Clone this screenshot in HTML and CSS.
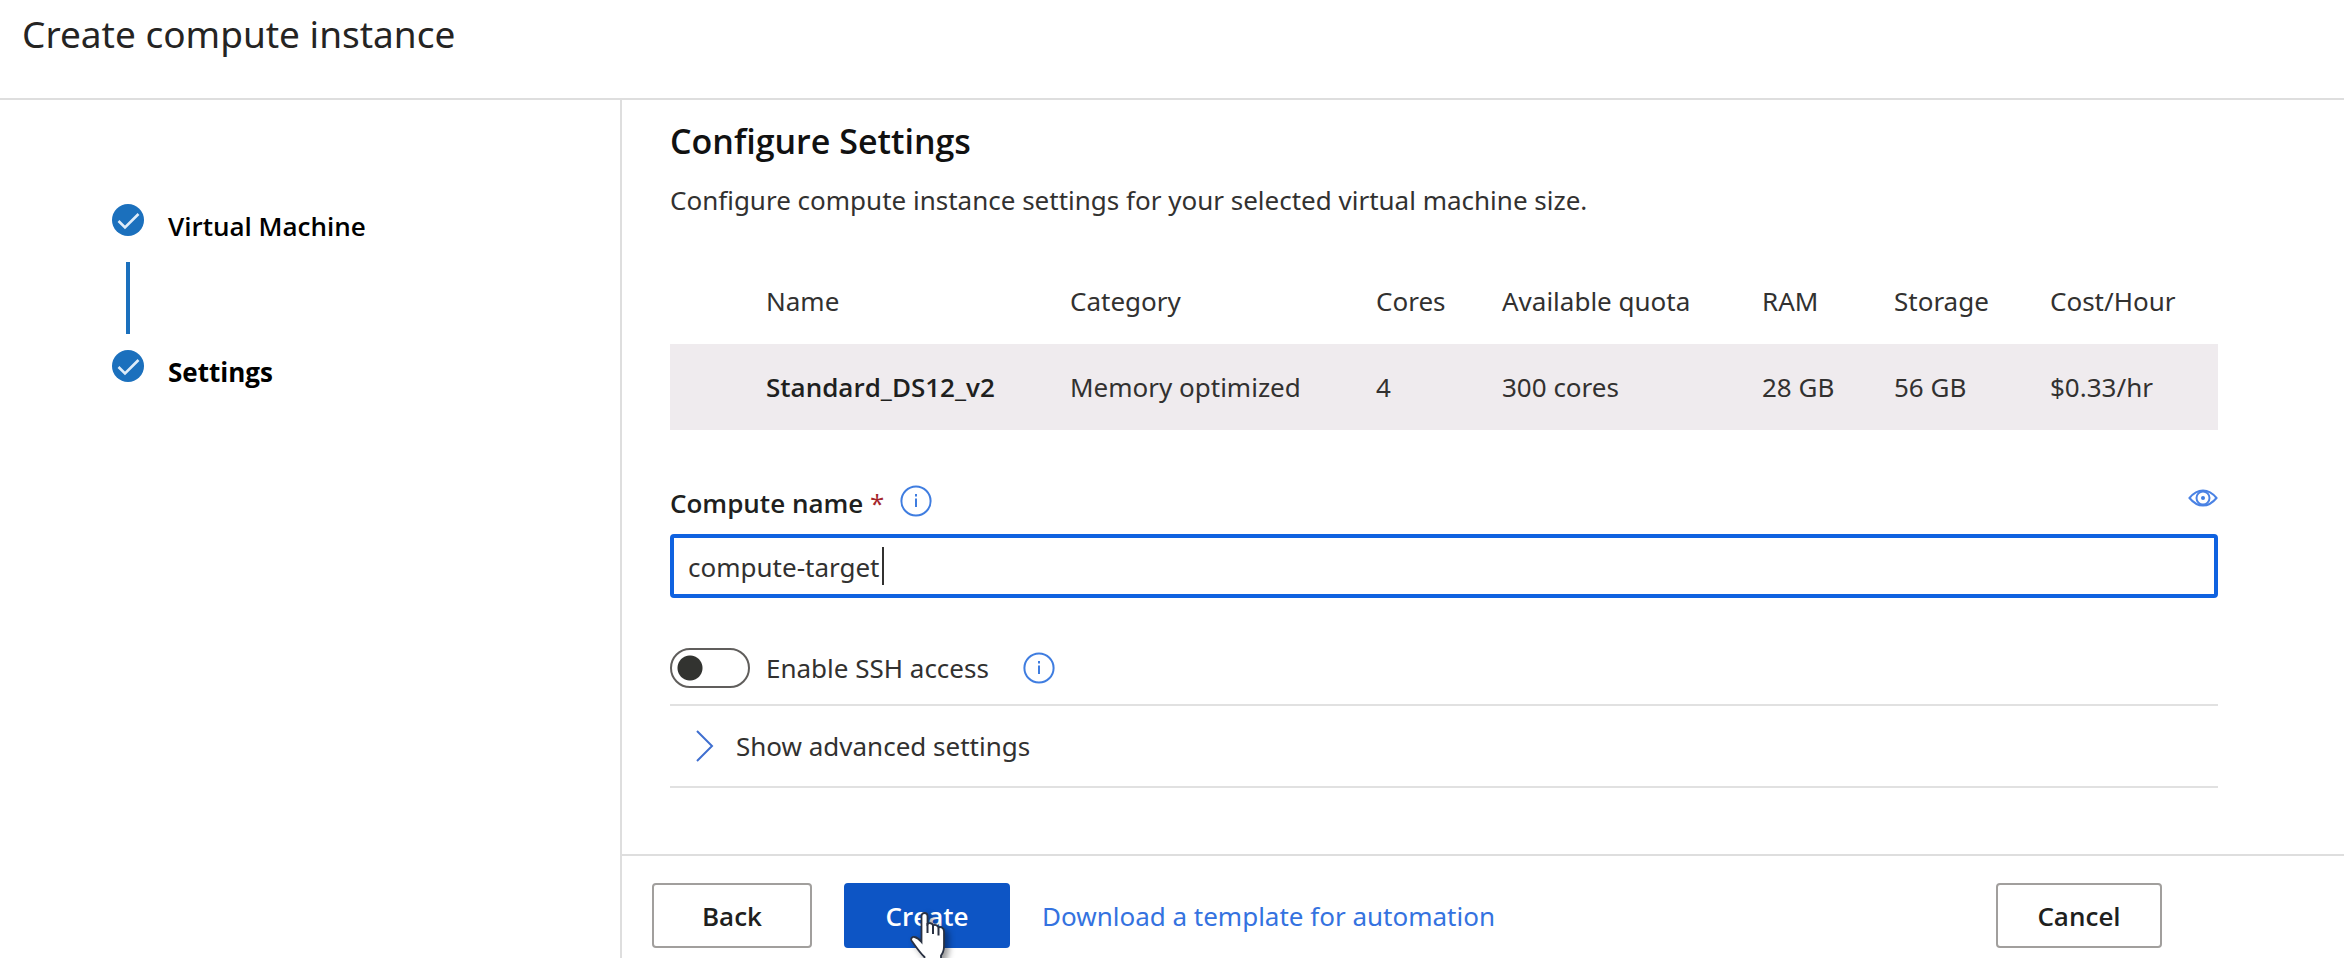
FILE: index.html
```html
<!DOCTYPE html>
<html lang="en">
<head>
<meta charset="utf-8">
<title>Create compute instance</title>
<link rel="stylesheet" href="styles.css">
</head>
<body class="page">
<header class="page-header"><h1 class="page-title">Create compute instance</h1></header>
<div class="wizard">
  <nav class="steps" aria-label="Steps">
    <ol class="step-list">
      <li class="step">
        <svg class="step-icon" viewBox="0 0 32 32" aria-hidden="true"><circle cx="16" cy="16" r="16" fill="#1b70bd"/><path d="M6.500 17l6.500 6.500L26.500 10" fill="none" stroke="#deecf9" stroke-width="2.600"/></svg>
        <span class="step-label">Virtual Machine</span>
        <span class="step-line"></span>
      </li>
      <li class="step" aria-current="step">
        <svg class="step-icon" viewBox="0 0 32 32" aria-hidden="true"><circle cx="16" cy="16" r="16" fill="#1b70bd"/><path d="M6.500 17l6.500 6.500L26.500 10" fill="none" stroke="#deecf9" stroke-width="2.600"/></svg>
        <span class="step-label step-label-current">Settings</span>
      </li>
    </ol>
  </nav>
  <main class="panel">
    <section class="content">
      <h2 class="section-title">Configure Settings</h2>
      <p class="description">Configure compute instance settings for your selected virtual machine size.</p>
      <table class="sizes">
        <colgroup><col class="col-name"><col class="col-category"><col class="col-cores"><col class="col-quota"><col class="col-ram"><col class="col-storage"><col class="col-cost"></colgroup>
        <thead><tr><th>Name</th><th>Category</th><th>Cores</th><th>Available quota</th><th>RAM</th><th>Storage</th><th>Cost/Hour</th></tr></thead>
        <tbody><tr><td class="size-name">Standard_DS12_v2</td><td>Memory optimized</td><td>4</td><td>300 cores</td><td>28 GB</td><td>56 GB</td><td>$0.33/hr</td></tr></tbody>
      </table>
      <div class="field-head">
        <label class="field-label" for="compute-name">Compute name <span class="required">*</span></label>
        <svg class="info" viewBox="0 0 32 32" role="img" aria-label="Information"><circle cx="16" cy="16" r="14.600"/><path d="M16 13.500V22"/><path d="M16 9v2.500"/></svg>
        <svg class="eye" viewBox="0 0 30 18" role="img" aria-label="Preview"><path d="M1.500 9C6 3.500 10 1.500 15 1.500S24 3.500 28.500 9C24 14.500 20 16.500 15 16.500S6 14.500 1.500 9z"/><circle cx="15" cy="9" r="6.500"/><circle class="pupil" cx="15" cy="9" r="2"/></svg>
      </div>
      <div class="textbox"><input class="textbox-input" id="compute-name" type="text" value="compute-target" required><span class="caret"></span></div>
      <div class="toggle-row">
        <input class="toggle" id="ssh" type="checkbox" role="switch">
        <label class="toggle-label" for="ssh">Enable SSH access</label>
        <svg class="info" viewBox="0 0 32 32" role="img" aria-label="Information"><circle cx="16" cy="16" r="14.600"/><path d="M16 13.500V22"/><path d="M16 9v2.500"/></svg>
      </div>
      <button class="advanced" type="button"><svg class="chevron" viewBox="0 0 18 32" aria-hidden="true"><path d="M1 1l15 15L1 31"/></svg>Show advanced settings</button>
    </section>
    <footer class="actions">
      <button class="button button-back" type="button">Back</button>
      <button class="button button-primary" type="button">Create
        <svg class="pointer" viewBox="0 0 36 54" aria-hidden="true"><path d="M11.500 4C11.500 2 13 1 14.500 1S17.500 2 17.500 4V12C19 10.500 22.500 11 23 13.500C24.500 12.300 27.500 12.800 28.500 15.500C31 14.500 34 16 34 19.500V34C34 38 33 41 31 43.500V49H14.500V45C10 41 5 33.500 1.500 28.500C.5 26.500 2 24.500 4.500 25C7.500 25.500 9.500 27.500 11.500 30z" fill="#fff" stroke="#293142" stroke-width="1.800"/><path d="M17.500 11v10M23 13.500V22M28.500 15.500v8" fill="none" stroke="#293142" stroke-width="2"/></svg>
      </button>
      <a class="template-link" href="#">Download a template for automation</a>
      <button class="button button-cancel" type="button">Cancel</button>
    </footer>
  </main>
</div>
</body>
</html>
```

FILE: styles.css
```css
* { box-sizing: border-box; }

.page {
  margin: 0;
  min-height: 100vh;
  display: flex;
  flex-direction: column;
  background: #fff;
  color: #323130;
  font: 400 26px/36px "Noto Sans", "Open Sans", sans-serif;
}

.page-header {
  padding: 16px 22px 46px;
  border-bottom: 2px solid #dedede;
}
.page-title { margin: 0; font-size: 37px; line-height: 36px; font-weight: 400; color: #252423; }

.wizard { flex: 1; display: grid; grid-template-columns: 622px 1fr; }

.steps { border-right: 2px solid #dedede; padding: 104px 24px 0 112px; }
.step-list { margin: 0; padding: 0; list-style: none; }
.step { display: grid; grid-template-columns: 32px 1fr; column-gap: 24px; color: #000; }
.step-icon { width: 32px; height: 32px; }
.step-label { padding-top: 4px; height: 32px; font-family: "Open Sans", "Noto Sans", sans-serif; font-weight: 600; }
.step-label-current { font-weight: 700; }
.step-line { width: 4px; height: 72px; margin: 26px auto 16px; background: #1b70bd; }

.panel { display: flex; flex-direction: column; min-width: 0; }
.content { flex: 1; padding: 19px 126px 24px 48px; }
.section-title { margin: 0; font-family: "Open Sans", "Noto Sans", sans-serif; font-size: 34px; line-height: 44px; font-weight: 600; color: #111; }
.description { margin: 19px 0 40px; }

.sizes { width: 100%; table-layout: fixed; border-collapse: collapse; text-align: left; }
.sizes th, .sizes td { height: 86px; padding: 0; font-weight: 400; white-space: nowrap; }
.sizes tbody { background: #efebee; }
.sizes th:first-child, .sizes td:first-child { padding-left: 96px; }
.sizes .size-name { font-family: "Open Sans", "Noto Sans", sans-serif; font-weight: 600; color: #201f1e; }
.col-name { width: 400px; }
.col-category { width: 306px; }
.col-cores { width: 126px; }
.col-quota { width: 260px; }
.col-ram { width: 132px; }
.col-storage { width: 156px; }

.field-head { display: flex; align-items: flex-start; margin: 55px 0 13px; }
.field-label { margin-right: 16px; font-family: "Open Sans", "Noto Sans", sans-serif; font-weight: 600; color: #201f1e; }
.required { font-weight: 400; color: #a4262c; }
.info { width: 32px; height: 32px; fill: none; stroke: #3f7de0; stroke-width: 2; }
.eye { width: 30px; height: 18px; margin: 4px 0 0 auto; fill: none; stroke: #4a82e4; stroke-width: 2; }
.pupil { fill: #3f7de0; stroke: none; }

.textbox { display: flex; align-items: center; height: 64px; padding: 0 14px; border: 4px solid #0f62e0; border-radius: 4px; }
.textbox-input { field-sizing: content; border: 0; padding: 2px 2px 0 0; outline: 0; background: none; font: inherit; color: inherit; }
.caret { width: 2px; height: 38px; background: #323130; }

.toggle-row { display: flex; align-items: center; height: 56px; margin-top: 50px; padding-bottom: 16px; }
.toggle {
  appearance: none;
  width: 80px;
  height: 40px;
  margin: 0 16px 0 0;
  border: 2px solid #605e5c;
  border-radius: 20px;
  background: radial-gradient(circle at 18px 18px, #323330 12px, transparent 13px);
}
.toggle-label { margin-right: 34px; }

.advanced {
  display: flex;
  align-items: center;
  gap: 22px;
  width: 100%;
  height: 84px;
  padding: 0 26px;
  border: solid #e1e1e1;
  border-width: 2px 0;
  background: none;
  font: inherit;
  color: inherit;
}
.chevron { width: 18px; height: 32px; fill: none; stroke: #3f6fd0; stroke-width: 2; }

.actions { display: flex; align-items: center; padding: 27px 182px 10px 30px; border-top: 2px solid #dedede; overflow: hidden; }
.button { height: 65px; padding: 0; border: 2px solid #a19f9d; border-radius: 4px; background: #fff; font: 600 26px/36px "Open Sans", "Noto Sans", sans-serif; color: #201f1e; }
.button-back { width: 160px; margin-right: 32px; }
.button-primary { position: relative; width: 166px; margin-right: 32px; border-color: #0d55c5; background: #0d55c5; color: #fff; }
.button-cancel { width: 166px; margin-left: auto; }
.template-link { color: #3472e0; text-decoration: none; }
.pointer { position: absolute; left: 64px; top: 27px; width: 36px; height: 54px; filter: drop-shadow(4px 3px 3px #0006); }
```
